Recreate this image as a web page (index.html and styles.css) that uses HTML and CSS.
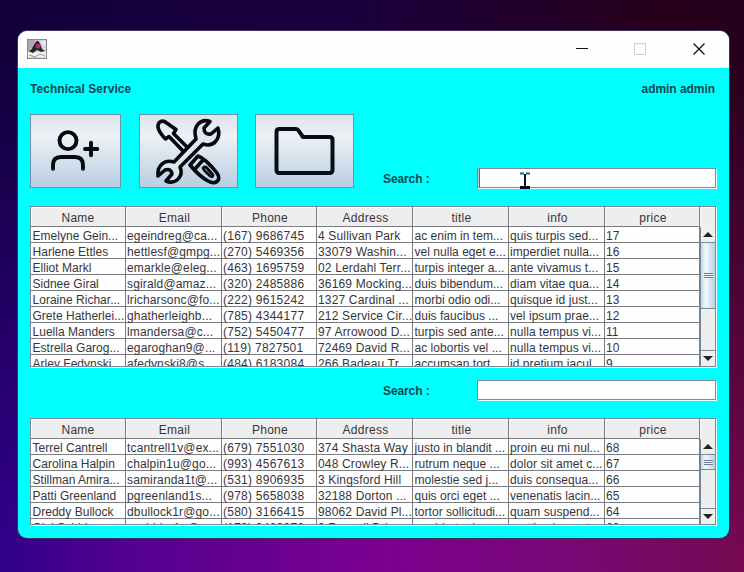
FILE: index.html
```html
<!DOCTYPE html>
<html lang="en">
<head>
<meta charset="utf-8">
<title>Technical Service</title>
<link rel="stylesheet" href="styles.css">
</head>
<body>
<div class="window">
  <header class="titlebar">
    <svg class="app-icon" width="20" height="20" viewBox="0 0 20 20">
      <rect x=".5" y=".5" width="19" height="19" fill="#d5d6d8" stroke="#87898c"/>
      <path d="M1 1h8L3 11H1z" fill="#aaa"/>
      <path d="M14 2h4v5z" fill="#f4f4f4"/>
      <path d="M1 13l5-2 3 3 5-3 5 3v4H1z" fill="#f3f3f3"/>
      <path d="M10.500 1.500C7 4 6 8 4 11l-3 1 5 2 4-3 4 2 4-1-3-2C14 7 13 3 10.500 1.500z" fill="#25272c"/>
      <path d="M2 16l6 2 5-3 5 2" fill="none" stroke="#999"/>
      <circle cx="11" cy="7" r="2.500" fill="#b52773"/>
    </svg>
    <svg class="controls" width="130" height="14" viewBox="0 0 130 14" fill="none">
      <path d="M0 6.500h12" stroke="#111" stroke-width="1.200"/>
      <rect x="58.500" y="1.500" width="11" height="11" stroke="#d4d0d8"/>
      <path d="M117.500 1.500l11 11m0-11l-11 11" stroke="#111" stroke-width="1.300"/>
    </svg>
  </header>
  <main class="content">
    <div class="heading"><span class="brand">Technical Service</span><span class="user">admin admin</span></div>
    <div class="toolbar">
      <button class="tool tool-user">
        <svg width="89" height="72" viewBox="31 115 89 72" fill="none" stroke="#050910" stroke-width="3.900" stroke-linecap="round">
          <circle cx="68" cy="140.600" r="8.500"/>
          <path d="M53 168.800v-3.500q0-8.300 8-8.300h14q8 0 8 8.300v3.500"/>
          <path d="M85 149h12.300M91 142.700v12.500"/>
        </svg>
      </button>
      <button class="tool tool-repair">
        <svg width="97" height="72" viewBox="140 115 97 72" fill="none" stroke="#050910" stroke-width="3.600" stroke-linejoin="round">
          <g transform="translate(156 119)">
            <path d="M34 31L17.500 14.500 20 10.500 8.500 2.500C4.500 1 1.500 4 2 8.500q1.500 5.500 7.500 11.500l3.500-2.500L28 33"/>
            <path d="M34 46l8-9C50 40 57 49 61 54c5 8-2 12-9 8Q43 57 34 46z"/>
            <path d="M39 50l8-9"/>
            <path d="M47 49q2-2 4 0l6 7q0 3-3 1l-6-6z" stroke-width="2.700"/>
            <path d="M54 2.500C45-1 36 7 40 20L18 43C8 40 1 47 2 57L9 51q6-2 7 4l-6 7C20 66 28 57 24 48L47 25C58 29 65 19 62 9L55 15Q48 16 48 9z" fill="#dfe6ee"/>
          </g>
        </svg>
      </button>
      <button class="tool tool-folder">
        <svg width="97" height="72" viewBox="256 115 97 72" fill="none" stroke="#050f1b" stroke-width="4" stroke-linejoin="round">
          <path d="M279.500 129h16q2 0 3 1.500l4.500 6.500h26.500q3 0 3 3v30q0 3-3 3h-50q-3 0-3-3v-38q0-3 3-3z"/>
        </svg>
      </button>
      <label class="search-label" for="top-search">Search :</label>
      <div class="search-wrap">
        <input class="search focused" id="top-search" type="text">
        <svg class="ibeam" width="12" height="18" viewBox="0 0 12 18"><path d="M1 1.500h4M7 1.500h4" stroke="#087186" stroke-width="2"/><path d="M6 2v13" stroke="#071727" stroke-width="2"/><path d="M1 15.500h10" stroke="#020b19" stroke-width="3"/></svg>
      </div>
    </div>

    <section class="scrollpane pane-top">
      <div class="row head"><b>Name</b><b>Email</b><b>Phone</b><b>Address</b><b>title</b><b>info</b><b>price</b><b></b></div>
      <div class="body">
        <div class="rows">
          <div class="row"><span>Emelyne Gein...</span><span>egeindreg@ca...</span><span>(167) 9686745</span><span>4 Sullivan Park</span><span>ac enim in tem...</span><span>quis turpis sed...</span><span>17</span></div>
          <div class="row"><span>Harlene Ettles</span><span>hettlesf@gmpg...</span><span>(270) 5469356</span><span>33079 Washin...</span><span>vel nulla eget e...</span><span>imperdiet nulla...</span><span>16</span></div>
          <div class="row"><span>Elliot Markl</span><span>emarkle@eleg...</span><span>(463) 1695759</span><span>02 Lerdahl Terr...</span><span>turpis integer a...</span><span>ante vivamus t...</span><span>15</span></div>
          <div class="row"><span>Sidnee Giral</span><span>sgirald@amaz...</span><span>(320) 2485886</span><span>36169 Mocking...</span><span>duis bibendum...</span><span>diam vitae qua...</span><span>14</span></div>
          <div class="row"><span>Loraine Richar...</span><span>lricharsonc@fo...</span><span>(222) 9615242</span><span>1327 Cardinal ...</span><span>morbi odio odi...</span><span>quisque id just...</span><span>13</span></div>
          <div class="row"><span>Grete Hatherlei...</span><span>ghatherleighb...</span><span>(785) 4344177</span><span>212 Service Cir...</span><span>duis faucibus ...</span><span>vel ipsum prae...</span><span>12</span></div>
          <div class="row"><span>Luella Manders</span><span>lmandersa@c...</span><span>(752) 5450477</span><span>97 Arrowood D...</span><span>turpis sed ante...</span><span>nulla tempus vi...</span><span>11</span></div>
          <div class="row"><span>Estrella Garog...</span><span>egaroghan9@...</span><span>(119) 7827501</span><span>72469 David R...</span><span>ac lobortis vel ...</span><span>nulla tempus vi...</span><span>10</span></div>
          <div class="row"><span>Arley Fedynski</span><span>afedynski8@s...</span><span>(484) 6183084</span><span>266 Badeau Tr...</span><span>accumsan tort...</span><span>id pretium iacul...</span><span>9</span></div>
        </div>
        <div class="scrollbar"><i class="arrow up"></i><i class="thumb"></i><i class="track"></i><i class="arrow down"></i></div>
      </div>
    </section>

    <div class="search-row"><label class="search-label" for="low-search">Search :</label><div class="search-wrap"><input class="search" id="low-search" type="text"></div></div>

    <section class="scrollpane pane-bottom">
      <div class="row head"><b>Name</b><b>Email</b><b>Phone</b><b>Address</b><b>title</b><b>info</b><b>price</b><b></b></div>
      <div class="body">
        <div class="rows">
          <div class="row"><span>Terrel Cantrell</span><span>tcantrell1v@ex...</span><span>(679) 7551030</span><span>374 Shasta Way</span><span>justo in blandit ...</span><span>proin eu mi nul...</span><span>68</span></div>
          <div class="row"><span>Carolina Halpin</span><span>chalpin1u@go...</span><span>(993) 4567613</span><span>048 Crowley R...</span><span>rutrum neque ...</span><span>dolor sit amet c...</span><span>67</span></div>
          <div class="row"><span>Stillman Amira...</span><span>samiranda1t@...</span><span>(531) 8906935</span><span>3 Kingsford Hill</span><span>molestie sed j...</span><span>duis consequa...</span><span>66</span></div>
          <div class="row"><span>Patti Greenland</span><span>pgreenland1s...</span><span>(978) 5658038</span><span>32188 Dorton ...</span><span>quis orci eget ...</span><span>venenatis lacin...</span><span>65</span></div>
          <div class="row"><span>Dreddy Bullock</span><span>dbullock1r@go...</span><span>(580) 3166415</span><span>98062 David Pl...</span><span>tortor sollicitudi...</span><span>quam suspend...</span><span>64</span></div>
          <div class="row"><span>Giel Schid...</span><span>gschider1q@...</span><span>(173) 9403970</span><span>9 Russell Driv...</span><span>morbi ut od...</span><span>mattis element...</span><span>63</span></div>
        </div>
        <div class="scrollbar"><i class="arrow up"></i><i class="thumb"></i><i class="track"></i><i class="arrow down"></i></div>
      </div>
    </section>
  </main>
</div>
</body>
</html>
```
FILE: styles.css
```css
* { box-sizing: border-box; }
body {
  margin: 0;
  width: 744px;
  height: 572px;
  padding: 31px 0 0 18px;
  overflow: hidden;
  font: 12px "Liberation Sans", Arial, sans-serif;
  color: #36363a;
  background: linear-gradient(90deg, #12003a, #1b0040 45%, #28001b 90%, #25001c);
  isolation: isolate;
}
body::before {
  content: "";
  position: absolute;
  inset: 0;
  z-index: -1;
  background: linear-gradient(90deg, #30008a, #500090 15%, #7b0090 50%, #7a0878 75%, #750850);
  mask-image: linear-gradient(transparent 8%, #000 95%);
}
.window {
  width: 711px;
  height: 507px;
  border-radius: 9px;
  overflow: hidden;
  background: #00ffff;
  box-shadow: 0 0 0 1px #40305a;
}
.titlebar {
  height: 37px;
  padding: 8px 23px 0 9px;
  display: flex;
  justify-content: space-between;
  background: #fefefe;
}
.controls { margin-top: 3px; }
.content { padding: 0 12px; }
.heading {
  height: 46px;
  padding-top: 14px;
  display: flex;
  justify-content: space-between;
  font-weight: bold;
  line-height: 14px;
  color: #12474f;
}
.brand { letter-spacing: .04px; }
.user { margin-right: 2px; letter-spacing: -.05px; }
.toolbar { height: 92px; display: flex; align-items: flex-start; }
.tool {
  height: 74px;
  padding: 0;
  border: 1px solid #7192a4;
  background: linear-gradient(#dce4ee, #eef1f6 30%, #dfe6ef 50%, #b9cee3);
}
.tool svg { display: block; }
.tool-user { width: 91px; margin-right: 18px; }
.tool-repair { width: 99px; margin-right: 17px; }
.tool-folder { width: 99px; margin-right: 29px; }
.search-label {
  width: 94px;
  font-weight: bold;
  line-height: 14px;
  letter-spacing: -.1px;
  color: #12474f;
}
.toolbar .search-label { margin-top: 58px; }
.search-wrap { position: relative; width: 239px; height: 20px; }
.toolbar .search-wrap { margin-top: 54px; }
.search {
  display: block;
  width: 239px;
  height: 20px;
  padding: 0;
  border: 1px solid #7a8a99;
  border-radius: 0;
  outline: 0;
  background: #fefefe;
  box-shadow: 1px 1px #e9ffff;
}
.focused { box-shadow: 1px 1px #e9ffff, inset 1px 0 #c8c8cc, inset 2px 0 #666; }
.ibeam { position: absolute; left: 42px; top: 4px; }
.scrollpane {
  width: 686px;
  border: 1px solid #7a8a99;
  box-shadow: 1px 1px #e9ffff;
  overflow: hidden;
  background: #fefeff;
}
.pane-top { height: 161px; }
.pane-bottom { height: 107px; }
.row {
  display: grid;
  grid-template-columns: 95px 96px 95px 96px 96px 96px 95px;
  grid-template-rows: 100%;
  height: 16px;
}
.row span {
  padding: 2px 0 0 1px;
  border-right: 1px solid #7b7b82;
  border-bottom: 1px solid #7b7b82;
  line-height: 14px;
  white-space: nowrap;
  letter-spacing: .06px;
}
.row span:nth-child(1) { padding-left: 1.5px; letter-spacing: .02px; }
.row span:nth-child(2) { letter-spacing: .15px; }
.row span:nth-child(3) { letter-spacing: .25px; }
.row span:nth-child(4) { letter-spacing: .16px; }
.row span:nth-child(5) { padding-left: 1.5px; letter-spacing: .03px; }
.head {
  grid-template-columns: 95px 96px 95px 96px 96px 96px 95px 15px;
  height: 20px;
  background: #eee;
}
.head b {
  padding: 2px 0 0 2px;
  font-weight: normal;
  text-align: center;
  line-height: 18px;
  letter-spacing: .25px;
  border-right: 1px solid #7b7b82;
  border-bottom: 1px solid #7b7b82;
  box-shadow: inset 1px 1px #fafafa;
}
.head b:first-child { padding-left: 0; }
.head b:last-child { border: 0; }
.body { display: flex; }
.pane-top .body { height: 139px; }
.pane-bottom .body { height: 85px; }
.rows { width: 669px; overflow: hidden; }
.scrollbar {
  width: 15px;
  display: flex;
  flex-direction: column;
  border-left: 1px solid #7a8a99;
  background: #eee;
}
.arrow { height: 16px; flex: none; display: grid; place-items: center; background: #efefef; }
.arrow::before { content: ""; border: 5px solid transparent; }
.up { border-bottom: 1px solid #7a8a99; }
.up::before { border-top: 0; border-bottom-color: #222; }
.down { border-top: 1px solid #7a8a99; }
.down::before { border-bottom: 0; border-top-color: #222; }
.track { flex: 1; }
.thumb {
  height: 66px;
  display: grid;
  place-items: center;
  border-bottom: 1px solid #6c8fa8;
  background: linear-gradient(90deg, #c5d6e8, #f4f8fc 35%, #b8cfe5);
}
.thumb::before {
  content: "";
  width: 9px;
  height: 5px;
  background: repeating-linear-gradient(#687f9d 0 1px, #f0f5fa 1px 2px);
}
.pane-bottom .thumb { height: 15px; }
.search-row {
  height: 51px;
  padding: 13px 0 0 353px;
  display: flex;
  align-items: flex-start;
}
.search-row .search-label { margin-top: 4px; }
```
